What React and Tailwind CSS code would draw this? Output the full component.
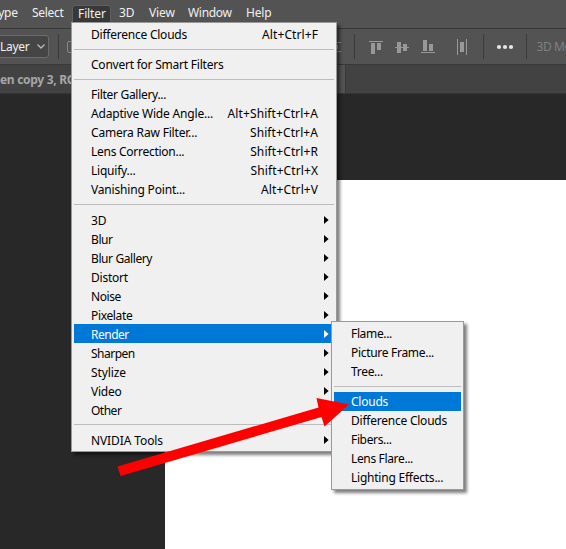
import React from "react";

const FONT = "font-['Noto_Sans','Noto_Sans_CJK_KR',sans-serif]";

function Arrow({ active }) {
  return (
    <svg width="5" height="8" viewBox="0 0 5 8" className={active ? "fill-white" : "fill-black"}>
      <path d="M0 0L4.6 4L0 8Z" />
    </svg>
  );
}

function Sep() {
  return (
    <div className="flex h-[11px] items-center">
      <div className="h-px w-full bg-[#bcbcbc]" />
    </div>
  );
}

function Item({ label, keys, sub, active, track = "tracking-[-0.23px]" }) {
  return (
    <div
      className={`flex h-[19px] items-center justify-between pl-[17px] ${sub ? "pr-[5px]" : "pr-[16px]"} ${
        active ? "bg-[#0078d7] text-white" : ""
      }`}
    >
      <span className={`${track} ${sub ? "translate-y-px" : ""}`}>{label}</span>
      {keys && <span className="-mr-[0.1px] tracking-[0.1px]">{keys}</span>}
      {sub && <Arrow active={active} />}
    </div>
  );
}

function Panel({ className, children }) {
  return (
    <div
      className={`absolute border border-[#999] bg-[#f0f0f0] p-[2px] text-[12px] leading-[19px] text-black whitespace-nowrap shadow-[3px_3px_3px_rgba(0,0,0,0.5)] ${className}`}
    >
      {children}
    </div>
  );
}

export default function App() {
  return (
    <div className={`relative h-[549px] w-[566px] overflow-hidden bg-[#282828] text-[12px] whitespace-nowrap ${FONT}`}>
      <div className="flex h-[28px] bg-[#535353] leading-[26px] text-[#f0f0f0]">
        <span className="-ml-[8px] w-[40px] tracking-[-0.25px]">Type</span>
        <span className="w-[40px] tracking-[-0.3px]">Select</span>
        <span className="mt-[5px] h-[23px] w-[39px] rounded-[3px] border border-[#606060] bg-[#383838] pl-[5px] leading-[15px] tracking-[-0.1px]">Filter</span>
        <span className="ml-[8px] w-[30px]">3D</span>
        <span className="w-[39px] tracking-[-0.1px]">View</span>
        <span className="w-[58px] tracking-[-0.3px]">Window</span>
        <span className="tracking-[-0.2px]">Help</span>
      </div>
      <div className="flex h-[37px] items-center border-y border-[#383838] bg-[#535353]">
        <div className="-ml-1 flex h-[23px] w-[53px] items-center justify-between rounded-[3px] border border-[#6b6b6b] bg-[#454545] pr-[3px] pl-[3px] tracking-[-0.3px] text-[#f0f0f0]">
          Layer
          <svg width="8" height="5" viewBox="0 0 8 5" fill="none" stroke="#bbb" strokeWidth="1.3"><path d="M.5 .5L4 4L7.5 .5" /></svg>
        </div>
        <div className="ml-[9px] h-[25px] w-px bg-[#3b3b3b]" />
        <div className="ml-[8px] h-[12px] w-[12px] rounded-[2px] border border-[#888]" />
        <svg className="ml-auto shrink-0" width="236" height="35" viewBox="330 29 236 35" fill="#989898">
          <path d="M330 42h11v1h-11zM330 51h11v1h-11zM330 45h8v4h-8z" />
          <path d="M354 34h1v25h-1zM483 34h1v25h-1zM526 34h1v25h-1z" fill="#3b3b3b" />
          <path d="M369 41h14v1h-14zM371 43h4v11h-4zM377 43h4v7h-4z" />
          <path d="M395 47h14v1h-14zM397 42h4v11h-4zM403 44h4v7h-4z" />
          <path d="M421 52h14v1h-14zM423 40h4v11h-4zM429 44h4v7h-4z" />
          <path d="M457 39h1v16h-1zM466 39h1v16h-1zM460 42h4v10h-4z" />
          <g fill="#e6e6e6"><circle cx="499" cy="47" r="2.1" /><circle cx="505" cy="47" r="2.1" /><circle cx="511" cy="47" r="2.1" /></g>
          <text x="536.5" y="50.5" fill="#808080" fontSize="12" className="tracking-[-0.4px]">3D Mode:</text>
        </svg>
      </div>
      <div className="flex h-[29px] border-b border-[#363636] bg-[#424242]">
        <div className="w-[200px] leading-[29px] font-bold tracking-[-0.3px] text-[#a6a6a6]">en copy 3, RGB/8)</div>
        <div className="w-[146px] border-r border-[#383838] bg-[#535353]" />
      </div>
      <div className="mt-[86px] ml-[165px] h-[369px] bg-white" />

      <Panel className="top-[22px] left-[71px] h-[430px] w-[266px]">
        <Item label="Difference Clouds" keys="Alt+Ctrl+F" />
        <Sep />
        <Item label="Convert for Smart Filters" />
        <Sep />
        <Item label="Filter Gallery..." track="tracking-[-0.3px]" />
        <Item label="Adaptive Wide Angle..." keys="Alt+Shift+Ctrl+A" track="tracking-[-0.18px]" />
        <Item label="Camera Raw Filter..." keys="Shift+Ctrl+A" track="tracking-[-0.18px]" />
        <Item label="Lens Correction..." keys="Shift+Ctrl+R" track="tracking-[-0.27px]" />
        <Item label="Liquify..." keys="Shift+Ctrl+X" />
        <Item label="Vanishing Point..." keys="Alt+Ctrl+V" track="tracking-[-0.18px]" />
        <Sep />
        <Item label="3D" sub />
        <Item label="Blur" sub track="tracking-[-0.4px]" />
        <Item label="Blur Gallery" sub track="tracking-[-0.4px]" />
        <Item label="Distort" sub />
        <Item label="Noise" sub track="tracking-[-0.4px]" />
        <Item label="Pixelate" sub track="tracking-[-0.35px]" />
        <Item label="Render" sub active track="tracking-[-0.5px]" />
        <Item label="Sharpen" sub track="tracking-[-0.5px]" />
        <Item label="Stylize" sub track="tracking-[-0.1px]" />
        <Item label="Video" sub />
        <Item label="Other" sub track="tracking-[-0.5px]" />
        <Sep />
        <Item label="NVIDIA Tools" sub track="tracking-[-0.1px]" />
      </Panel>

      <Panel className="top-[321px] left-[331px] h-[169px] w-[133px]">
        <Item label="Flame..." track="tracking-[-0.35px]" />
        <Item label="Picture Frame..." track="tracking-[-0.3px]" />
        <Item label="Tree..." track="tracking-[-0.3px]" />
        <Sep />
        <Item label="Clouds" active />
        <Item label="Difference Clouds" />
        <Item label="Fibers..." track="tracking-[-0.35px]" />
        <Item label="Lens Flare..." track="tracking-[-0.35px]" />
        <Item label="Lighting Effects..." />
      </Panel>

      <svg className="absolute top-[390px] left-[110px]" width="245" height="92" viewBox="110 390 245 92">
        <path d="M117.5 466.5L318.5 407.5L316.5 398L349 404.5L324.5 426.5L321.5 417L120.5 476Z" fill="#f00" />
      </svg>
    </div>
  );
}
